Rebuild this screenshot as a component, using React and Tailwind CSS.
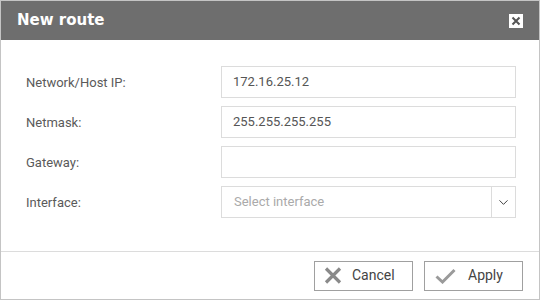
import { ChevronDown } from 'lucide-react'

const FIELDS = [
  { label: 'Network/Host IP:', value: '172.16.25.12' },
  { label: 'Netmask:', value: '255.255.255.255' },
  { label: 'Gateway:', value: '' },
]

function Row({ label, children }) {
  return (
    <div className="flex items-center h-[32px]">
      <label className="w-[195px] text-[13px] text-[#5a5a5a] pt-[1px]">{label}</label>
      {children}
    </div>
  )
}

export default function App() {
  return (
    <div className="w-[540px] h-[300px] bg-white border border-[#c4c4c4] flex flex-col" style={{ fontFamily: 'Roboto, "Liberation Sans", sans-serif' }}>
      {/* Header */}
      <div className="h-[39px] bg-[#6e6e6e] flex items-center justify-between pl-[16px] pr-[16px] flex-shrink-0">
        <h1 className="text-[15px] font-bold text-white" style={{ fontFamily: '"DejaVu Sans", sans-serif' }}>New route</h1>
        <button className="w-[14px] h-[14px] bg-white flex items-center justify-center" aria-label="Close">
          <svg width="10" height="10" viewBox="0 0 10 10">
            <path d="M1.5 1.5 L8.5 8.5 M8.5 1.5 L1.5 8.5" stroke="#555" strokeWidth="2" />
          </svg>
        </button>
      </div>

      {/* Form */}
      <div className="flex-1 pt-[26px] pl-[25px] pr-[23px] flex flex-col gap-[8px]">
        {FIELDS.map((f) => (
          <Row key={f.label} label={f.label}>
            <div className="flex-1 h-[32px] border border-[#dcdcdc] flex items-center px-[11px] text-[13px] text-[#555]">
              {f.value}
            </div>
          </Row>
        ))}
        <Row label="Interface:">
          <div className="flex-1 h-[32px] border border-[#dcdcdc] flex items-center">
            <span className="flex-1 px-[12px] text-[13px] text-[#aaa]">Select interface</span>
            <div className="w-[24px] h-full border-l border-[#dcdcdc] flex items-center justify-center">
              <ChevronDown size={15} strokeWidth={1.5} className="text-[#333]" />
            </div>
          </div>
        </Row>
      </div>

      {/* Footer */}
      <div className="h-[48px] border-t border-[#dcdcdc] flex items-center justify-end gap-[11px] pr-[16px] flex-shrink-0">
        <button className="w-[99px] h-[30px] border border-[#a0a0a0] flex items-center pl-[9px] gap-[10px] text-[14px] text-[#444]">
          <svg width="18" height="17" viewBox="0 0 18 17">
            <path d="M2 1.5 L16 15.5 M16 1.5 L2 15.5" stroke="#8a8a8a" strokeWidth="3.2" />
          </svg>
          Cancel
        </button>
        <button className="w-[99px] h-[30px] border border-[#a0a0a0] flex items-center pl-[10px] gap-[12px] text-[14px] text-[#444]">
          <svg width="21" height="16" viewBox="0 0 21 16">
            <path d="M1.5 8.5 L7.5 14 L19.5 2" stroke="#9a9a9a" strokeWidth="3" fill="none" />
          </svg>
          Apply
        </button>
      </div>
    </div>
  )
}
